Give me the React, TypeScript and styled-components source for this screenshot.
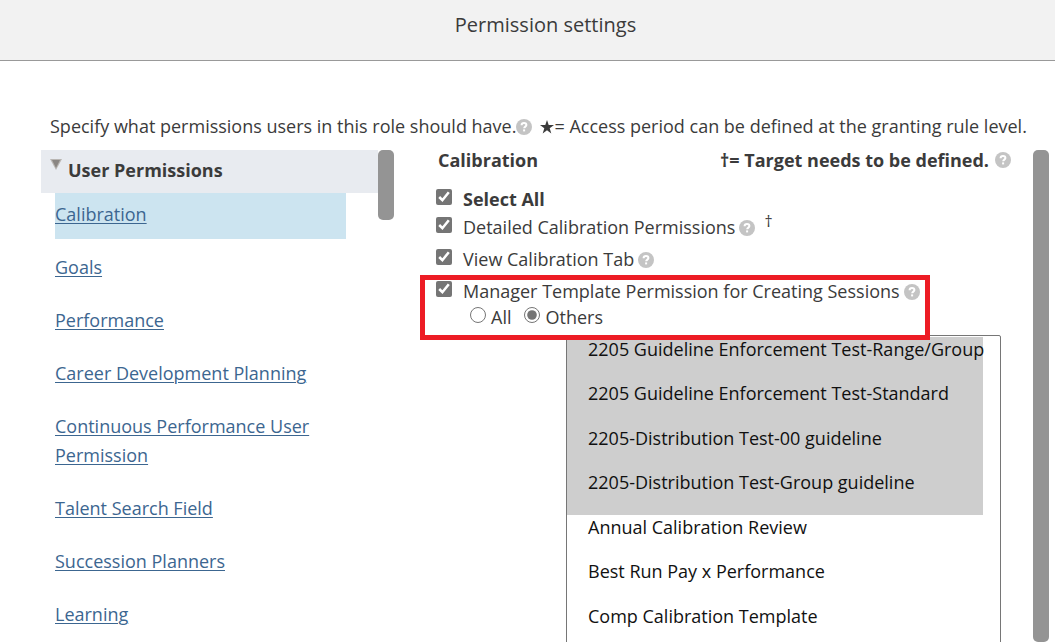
import React from "react";
import styled, { createGlobalStyle } from "styled-components";

const GlobalStyle = createGlobalStyle`
  * { box-sizing: border-box; }
  body {
    margin: 0;
    overflow: hidden;
    background: #fff;
    color: #3b3b3b;
    font-family: "Open Sans", "Noto Sans", sans-serif;
    font-size: 18px;
  }
`;

const Page = styled.div`
  display: flex;
  flex-direction: column;
  height: 100vh;
  overflow: hidden;
`;

const Header = styled.header`
  flex: none;
  padding: 10px 0 20px 36px;
  background: #f2f2f2;
  border-bottom: 1px solid #999;
`;

const Title = styled.h1`
  margin: 0;
  font-size: 20px;
  font-weight: 400;
  line-height: 30px;
  text-align: center;
`;

const Intro = styled.p`
  flex: none;
  display: flex;
  align-items: center;
  margin: 52px 0 10px 50px;
  line-height: 27px;
  white-space: nowrap;
`;

const Star = styled.svg`
  width: 14px;
  height: 14px;
  margin-left: 8px;
  fill: #3b3b3b;
`;

const Body = styled.main`
  flex: 1;
  display: grid;
  grid-template-columns: 353px minmax(0, 1fr) 16px;
  padding: 0 6px 0 41px;
  min-height: 0;
`;

const Sidebar = styled.nav`
  display: flex;
  align-items: flex-start;
  min-height: 0;
`;

const SidebarContent = styled.div`
  flex: 1;
`;

const SectionTitle = styled.h2`
  display: flex;
  align-items: flex-start;
  gap: 6px;
  margin: 0;
  padding: 8px 9px 10px;
  background: #e8ebf0;
  font-size: 18px;
  font-weight: 700;
  line-height: 25px;
`;

const Arrow = styled.svg`
  width: 12px;
  height: 12px;
`;

const LinkList = styled.ul`
  display: flex;
  flex-direction: column;
  gap: 7px;
  margin: 0;
  padding: 0 32px 0 14px;
  list-style: none;
`;

const LinkItem = styled.li<{ $active?: boolean }>`
  padding: 7px 0 10px;
  background: ${(p) => (p.$active ? "#cce4f0" : "transparent")};
  line-height: 29px;
`;

const NavLink = styled.a`
  color: #3c6690;
  text-decoration: underline;
  text-decoration-thickness: 1px;
  text-underline-offset: 2px;
`;

const ScrollThumb = styled.div<{ $height: string }>`
  width: 16px;
  height: ${(p) => p.$height};
  border-radius: 5px;
  background: #949494;
`;

const Panel = styled.section`
  display: flex;
  flex-direction: column;
  padding: 0 32px 0 26px;
  min-width: 0;
  min-height: 0;
`;

const PanelHeader = styled.div`
  display: flex;
  align-items: center;
  justify-content: space-between;
  margin: 0 -10px 16px 18px;
  font-weight: 700;
  line-height: 20px;
`;

const PanelTitle = styled.h2`
  margin: 0;
  font-size: 18px;
`;

const Note = styled.span`
  display: flex;
  align-items: center;
  gap: 6px;
`;

const Row = styled.div<{ $height: number }>`
  display: flex;
  align-items: flex-start;
  height: ${(p) => p.$height}px;
  padding-left: 16px;
  line-height: 26px;
  white-space: nowrap;
`;

const Check = styled.input`
  flex: none;
  width: 16px;
  height: 16px;
  margin: 3px 11px 0 0;
  accent-color: #757575;
`;

const Label = styled.label<{ $bold?: boolean }>`
  font-weight: ${(p) => (p.$bold ? 700 : 400)};
`;

const HelpIcon = styled.svg`
  flex: none;
  width: 16px;
  height: 16px;
`;

const RowHelp = styled.span`
  display: flex;
  padding: 6px 0 0 4px;
`;

const Dagger = styled.span`
  padding-left: 9px;
  font-size: 16px;
  line-height: 14px;
`;

const Highlight = styled.div`
  z-index: 1;
  align-self: flex-start;
  width: 510px;
  height: 65px;
  border: 5px solid #ed1c24;

  ${Row} {
    padding-left: 11px;
    line-height: 22px;
  }
  ${Check} {
    margin-top: 1px;
  }
  ${RowHelp} {
    padding-top: 4px;
  }
`;

const RadioGroup = styled.div`
  display: flex;
  gap: 13px;
  padding-left: 45px;
  line-height: 24px;
`;

const RadioLabel = styled.label`
  display: flex;
  gap: 5px;
`;

const Radio = styled.input`
  width: 16px;
  height: 16px;
  margin: 2px 0 0;
  accent-color: #757575;
`;

const TemplateList = styled.select`
  align-self: flex-end;
  flex: 1;
  width: 435px;
  margin: -5px 0 -10px;
  padding: 1px 17px 0 0;
  border: 1px solid #767676;
  border-radius: 2px;
  background: #fff;
  color: #111;
  font: inherit;
  outline: none;
  overflow: hidden;
`;

const TemplateOption = styled.option`
  height: 44px;
  padding: 0 0 0 21px;
  line-height: 19px;

  &:nth-child(even) {
    height: 45px;
  }
`;

const Help = () => (
  <HelpIcon viewBox="0 0 16 16" role="img" aria-label="Help">
    <circle cx="8" cy="8" r="8" fill="#c4c4c4" />
    <path d="M5.6 6.2C5.6 4.6 6.6 3.9 8 3.9s2.4.8 2.4 2.1c0 1.6-2.2 1.6-2.2 3.3" fill="none" stroke="#fff" strokeWidth="2" />
    <rect x="7.1" y="10.4" width="2" height="2" fill="#fff" />
  </HelpIcon>
);

const links = [
  "Calibration",
  "Goals",
  "Performance",
  "Career Development Planning",
  "Continuous Performance User Permission",
  "Talent Search Field",
  "Succession Planners",
  "Learning",
];

const templates = [
  "2205 Guideline Enforcement Test-Range/Group",
  "2205 Guideline Enforcement Test-Standard",
  "2205-Distribution Test-00 guideline",
  "2205-Distribution Test-Group guideline",
  "Annual Calibration Review",
  "Best Run Pay x Performance",
  "Comp Calibration Template",
];

export default function App() {
  return (
    <Page>
      <GlobalStyle />
      <Header>
        <Title>Permission settings</Title>
      </Header>
      <Intro>
        Specify what permissions users in this role should have.
        <Help />
        <Star viewBox="0 0 14 14">
          <path d="M7 0l1.7 5H14L9.7 8.2 11.3 13.4 7 10.3 2.7 13.4 4.3 8.2 0 5h5.300z" />
        </Star>
        = Access period can be defined at the granting rule level.
      </Intro>
      <Body>
        <Sidebar>
          <SidebarContent>
            <SectionTitle>
              <Arrow viewBox="0 0 12 12">
                <path d="M0 1h12L6 12z" fill="#b9b6b3" />
                <path d="M2 2h8L6 10z" fill="#8a8683" />
              </Arrow>
              User Permissions
            </SectionTitle>
            <LinkList>
              {links.map((name, i) => (
                <LinkItem key={name} $active={i === 0}>
                  <NavLink href="#">{name}</NavLink>
                </LinkItem>
              ))}
            </LinkList>
          </SidebarContent>
          <ScrollThumb $height="70px" />
        </Sidebar>
        <Panel>
          <PanelHeader>
            <PanelTitle>Calibration</PanelTitle>
            <Note>
              †= Target needs to be defined.
              <Help />
            </Note>
          </PanelHeader>
          <Row $height={28}>
            <Check type="checkbox" id="all" defaultChecked />
            <Label htmlFor="all" $bold>Select All</Label>
          </Row>
          <Row $height={32}>
            <Check type="checkbox" id="detailed" defaultChecked />
            <Label htmlFor="detailed">Detailed Calibration Permissions</Label>
            <RowHelp><Help /></RowHelp>
            <Dagger>†</Dagger>
          </Row>
          <Row $height={29}>
            <Check type="checkbox" id="view" defaultChecked />
            <Label htmlFor="view">View Calibration Tab</Label>
            <RowHelp><Help /></RowHelp>
          </Row>
          <Highlight>
            <Row $height={25}>
              <Check type="checkbox" id="manager" defaultChecked />
              <Label htmlFor="manager">Manager Template Permission for Creating Sessions</Label>
              <RowHelp><Help /></RowHelp>
            </Row>
            <RadioGroup role="radiogroup" aria-label="Templates">
              <RadioLabel><Radio type="radio" name="scope" />All</RadioLabel>
              <RadioLabel><Radio type="radio" name="scope" defaultChecked />Others</RadioLabel>
            </RadioGroup>
          </Highlight>
          <TemplateList multiple aria-label="Templates" defaultValue={templates.slice(0, 4)}>
            {templates.map((name) => (
              <TemplateOption key={name} value={name}>{name}</TemplateOption>
            ))}
          </TemplateList>
        </Panel>
        <ScrollThumb $height="100%" />
      </Body>
    </Page>
  );
}
